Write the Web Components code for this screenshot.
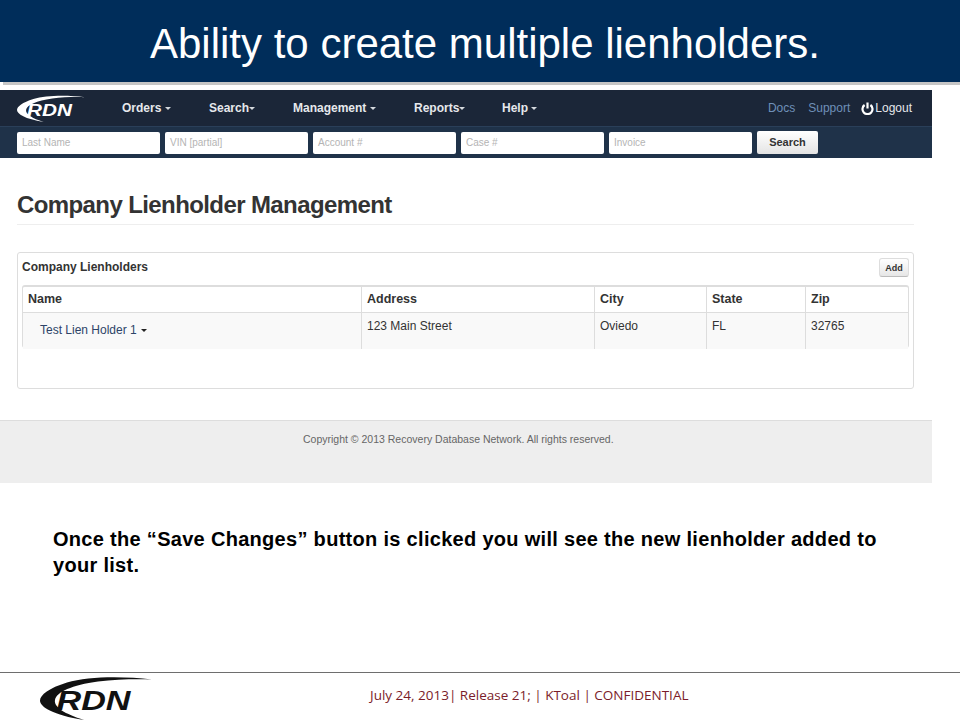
<!DOCTYPE html>
<html>
<head>
<meta charset="utf-8">
<title>Company Lienholder Management</title>
<style>
    html, body { margin: 0; padding: 0; background: #fff; }
    body { width: 960px; height: 720px; overflow: hidden; font-family: 'Liberation Sans', Arial, sans-serif; display: flex; flex-direction: column; }
</style>
</head>
<body>
<slide-header>Ability to create multiple lienholders.</slide-header>
<app-shot>
    <app-nav></app-nav>
    <search-bar></search-bar>
    <page-title>Company Lienholder Management</page-title>
    <lien-panel></lien-panel>
    <app-footer>Copyright © 2013 Recovery Database Network. All rights reserved.</app-footer>
</app-shot>
<slide-note>Once the “Save Changes” button is clicked you will see the new lienholder added to your list.</slide-note>
<slide-footer>July 24, 2013| Release 21; | KToal | CONFIDENTIAL</slide-footer>

<script>
class RdnLogo extends HTMLElement {
    connectedCallback() {
        const color = this.getAttribute('color') || '#fff';
        this.attachShadow({ mode: 'open' });
        this.shadowRoot.innerHTML = `
            <style>
                :host { display: block; line-height: 0; }
                svg { width: 100%; height: 100%; display: block; }
                text { font-family: 'Liberation Sans', sans-serif; font-weight: bold; font-style: italic; }
            </style>
            <svg viewBox="0 0 112 44" preserveAspectRatio="none">
                <path fill="${color}" d="M112 3.5C84 0 48 0 27 6.5C9 12 0 19 0 24.5C0 31 13 39 44 44C25 38 13.500 31 15 24C16.500 16 32 9 58 5.500C76 3.300 96 3 112 3.500Z"/>
                <text x="16.500" y="33.500" font-size="27" textLength="74" lengthAdjust="spacingAndGlyphs" fill="${color}">RDN</text>
            </svg>`;
    }
}
customElements.define('rdn-logo', RdnLogo);

class SlideHeader extends HTMLElement {
    connectedCallback() {
        this.attachShadow({ mode: 'open' });
        this.shadowRoot.innerHTML = `
            <style>
                :host { display: block; }
                .band {
                    height: 82px;
                    background: #002d5a;
                    color: #fff;
                    font-size: 42px;
                    line-height: 87px;
                    padding-left: 150px;
                    white-space: nowrap;
                }
                .rule { height: 3px; margin-left: 3px; background: #c6c6c6; }
            </style>
            <div class="band"><slot></slot></div>
            <div class="rule"></div>`;
    }
}
customElements.define('slide-header', SlideHeader);

class AppShot extends HTMLElement {
    connectedCallback() {
        this.attachShadow({ mode: 'open' });
        this.shadowRoot.innerHTML = `
            <style>
                :host { display: block; width: 932px; margin-top: 5px; }
            </style>
            <slot></slot>`;
    }
}
customElements.define('app-shot', AppShot);

class AppNav extends HTMLElement {
    connectedCallback() {
        const items = [
            ['Orders', 122, true], ['Search', 209, false], ['Management', 293, true],
            ['Reports', 414, false], ['Help', 502, true]
        ];
        this.attachShadow({ mode: 'open' });
        this.shadowRoot.innerHTML = `
            <style>
                :host {
                    display: flex;
                    align-items: center;
                    height: 36px;
                    background: #1b2638;
                    box-sizing: border-box;
                    font-size: 12px;
                    color: #e6e8ec;
                }
                rdn-logo { width: 68px; height: 27px; margin-left: 17px; flex: none; }
                .menu { display: flex; margin-left: 37px; font-weight: bold; }
                .menu span { white-space: nowrap; }
                .menu i {
                    display: inline-block; width: 0; height: 0; vertical-align: 2px;
                    border: 3px solid transparent; border-top-color: #d5d9de; border-bottom: 0;
                }
                .side { margin-left: auto; padding-right: 20px; display: flex; align-items: center; }
                .side a { color: #6f90b8; margin-left: 13px; }
                .side .out { color: #e6e8ec; display: flex; align-items: center; margin-left: 11px; }
                .side svg { width: 13px; height: 13px; margin-right: 1px; }
            </style>
            <rdn-logo></rdn-logo>
            <div class="menu">
                <span style="width:87px">Orders <i></i></span>
                <span style="width:84px">Search<i></i></span>
                <span style="width:121px">Management <i></i></span>
                <span style="width:88px">Reports<i></i></span>
                <span>Help <i></i></span>
            </div>
            <div class="side">
                <a>Docs</a><a>Support</a>
                <a class="out">
                    <svg viewBox="0 0 13 13" fill="none" stroke="#fff" stroke-width="2.200">
                        <path d="M3.600 3A5 5 0 1 0 9.400 3"/><path d="M6.500 .5V6.500"/>
                    </svg>Logout</a>
            </div>`;
    }
}
customElements.define('app-nav', AppNav);

class SearchBar extends HTMLElement {
    connectedCallback() {
        const fields = ['Last Name', 'VIN [partial]', 'Account #', 'Case #', 'Invoice'];
        this.attachShadow({ mode: 'open' });
        this.shadowRoot.innerHTML = `
            <style>
                :host {
                    display: flex;
                    gap: 5px;
                    height: 32px;
                    box-sizing: border-box;
                    padding: 5px 0 0 17px;
                    background: #1f3249;
                    border-top: 1px solid #2a3f59;
                }
                .field {
                    width: 143px;
                    height: 22px;
                    box-sizing: border-box;
                    background: #fff;
                    border-radius: 2px;
                    color: #b4b4b4;
                    font-size: 10px;
                    line-height: 22px;
                    padding-left: 5px;
                }
                .btn {
                    width: 61px;
                    height: 23px;
                    margin-top: -1px;
                    box-sizing: border-box;
                    background: linear-gradient(#fff, #e4e4e4);
                    border-radius: 2px;
                    color: #333;
                    font-size: 11px;
                    font-weight: bold;
                    text-align: center;
                    line-height: 22px;
                }
            </style>
            ${fields.map(f => `<div class="field">${f}</div>`).join('')}
            <div class="btn">Search</div>`;
    }
}
customElements.define('search-bar', SearchBar);

class PageTitle extends HTMLElement {
    connectedCallback() {
        this.attachShadow({ mode: 'open' });
        this.shadowRoot.innerHTML = `
            <style>
                :host {
                    display: block;
                    margin: 30px 18px 0 17px;
                    height: 36px;
                    border-bottom: 1px solid #eee;
                    color: #333;
                    font-size: 24px;
                    font-weight: bold;
                    letter-spacing: -0.6px;
                    line-height: 33px;
                }
            </style>
            <slot></slot>`;
    }
}
customElements.define('page-title', PageTitle);

class LienPanel extends HTMLElement {
    connectedCallback() {
        this.attachShadow({ mode: 'open' });
        this.shadowRoot.innerHTML = `
            <style>
                :host {
                    display: block;
                    margin: 27px 18px 0 17px;
                    height: 137px;
                    box-sizing: border-box;
                    border: 1px solid #ddd;
                    border-radius: 3px;
                    padding: 0 4px;
                    color: #333;
                }
                .head {
                    display: flex;
                    justify-content: space-between;
                    height: 32px;
                }
                h4 { margin: 6px 0 0; font-size: 12px; line-height: 16px; font-weight: bold; }
                .add {
                    margin-top: 5px;
                    width: 30px;
                    height: 19px;
                    box-sizing: border-box;
                    border: 1px solid #ddd;
                    border-bottom-color: #bbb;
                    border-radius: 3px;
                    background: linear-gradient(#fff, #e6e6e6);
                    font-size: 9px;
                    font-weight: bold;
                    line-height: 18px;
                    text-align: center;
                }
                .table {
                    display: grid;
                    grid-template-columns: 338px 233px 112px 99px 1fr;
                    grid-template-rows: 26px 36px;
                    height: 63px;
                    box-sizing: border-box;
                    border: 1px solid #ddd;
                    border-top: 2px solid #ddd;
                    border-radius: 3px;
                    font-size: 12px;
                }
                .table > div { box-sizing: border-box; border-left: 1px solid #ddd; padding-left: 5px; }
                .table > div:nth-child(5n+1) { border-left: 0; }
                .th { font-weight: bold; line-height: 24px; border-bottom: 1px solid #ddd; font-size: 12.5px; }
                .td { background: #f9f9f9; line-height: 26px; }
                .link { color: #2d4468; padding: 5px 0 0 12px; line-height: 24px; }
                .link i {
                    display: inline-block; width: 0; height: 0; vertical-align: 2px; margin-left: 1px;
                    border: 3px solid transparent; border-top-color: #222; border-bottom: 0;
                }
                .table > .name { padding-left: 17px; line-height: 35px; }
            </style>
            <div class="head">
                <h4>Company Lienholders</h4>
                <div class="add">Add</div>
            </div>
            <div class="table">
                <div class="th">Name</div>
                <div class="th">Address</div>
                <div class="th">City</div>
                <div class="th">State</div>
                <div class="th">Zip</div>
                <div class="td name"><span style="color:#2d4468">Test Lien Holder 1</span> <span class="link" style="padding:0"><i></i></span></div>
                <div class="td">123 Main Street</div>
                <div class="td">Oviedo</div>
                <div class="td">FL</div>
                <div class="td">32765</div>
            </div>`;
    }
}
customElements.define('lien-panel', LienPanel);

class AppFooter extends HTMLElement {
    connectedCallback() {
        this.attachShadow({ mode: 'open' });
        this.shadowRoot.innerHTML = `
            <style>
                :host {
                    display: block;
                    margin-top: 31px;
                    height: 63px;
                    box-sizing: border-box;
                    background: #eee;
                    border-top: 1px solid #ddd;
                    color: #666;
                    font-size: 10.500px;
                    line-height: 36px;
                    padding-left: 303px;
                }
            </style>
            <slot></slot>`;
    }
}
customElements.define('app-footer', AppFooter);

class SlideNote extends HTMLElement {
    connectedCallback() {
        this.attachShadow({ mode: 'open' });
        this.shadowRoot.innerHTML = `
            <style>
                :host {
                    display: block;
                    margin-top: 43px;
                    padding: 0 60px 0 53px;
                    height: 146px;
                    color: #000;
                    font-size: 20px;
                    font-weight: bold;
                    letter-spacing: .3px;
                    line-height: 26px;
                }
            </style>
            <slot></slot>`;
    }
}
customElements.define('slide-note', SlideNote);

class SlideFooter extends HTMLElement {
    connectedCallback() {
        this.attachShadow({ mode: 'open' });
        this.shadowRoot.innerHTML = `
            <style>
                :host {
                    display: flex;
                    align-items: flex-start;
                    height: 47px;
                    border-top: 1px solid #6e6e6e;
                    box-sizing: border-box;
                }
                rdn-logo { width: 112px; height: 44px; margin: 3px 0 0 40px; flex: none; }
                .txt {
                    margin: 13px 0 0 218px;
                    color: #7b1c2a;
                    font-family: 'Open Sans', sans-serif;
                    font-size: 13.500px;
                    line-height: 18px;
                    white-space: nowrap;
                }
            </style>
            <rdn-logo color="#111"></rdn-logo>
            <div class="txt"><slot></slot></div>`;
    }
}
customElements.define('slide-footer', SlideFooter);
</script>
</body>
</html>
